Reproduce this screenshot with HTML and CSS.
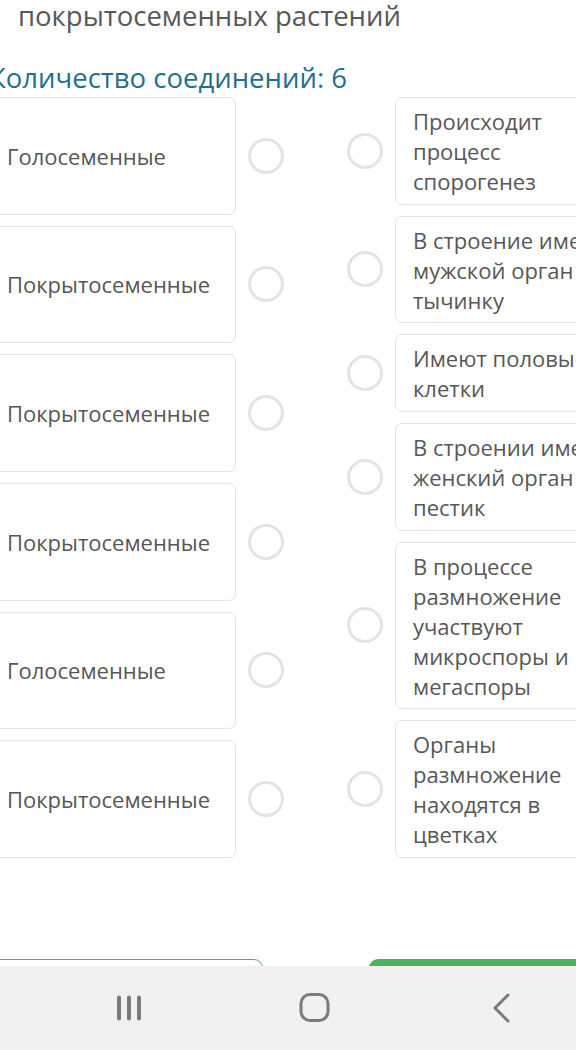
FILE: index.html
```html
<!DOCTYPE html>
<html lang="ru">
<head>
    <meta charset="UTF-8" />
    <meta name="viewport" content="width=device-width, initial-scale=1" />
    <title>Соединения</title>
    <link rel="stylesheet" href="styles.css">
</head>
<body>

    <main class="page">
        <h2 class="task-title">покрытосеменных растений</h2>
        <p class="count">Количество соединений: 6</p>

        <section class="match">
            <div class="col col-left">
                <div class="row">
                    <div class="card">Голосеменные</div>
                    <span class="pin"></span>
                </div>
                <div class="row">
                    <div class="card">Покрытосеменные</div>
                    <span class="pin"></span>
                </div>
                <div class="row">
                    <div class="card">Покрытосеменные</div>
                    <span class="pin"></span>
                </div>
                <div class="row">
                    <div class="card">Покрытосеменные</div>
                    <span class="pin"></span>
                </div>
                <div class="row">
                    <div class="card">Голосеменные</div>
                    <span class="pin"></span>
                </div>
                <div class="row">
                    <div class="card">Покрытосеменные</div>
                    <span class="pin"></span>
                </div>
            </div>

            <div class="col col-right">
                <div class="row">
                    <span class="pin"></span>
                    <div class="card">Происходит процесс спорогенез</div>
                </div>
                <div class="row">
                    <span class="pin"></span>
                    <div class="card">В строение имеет мужской орган тычинку</div>
                </div>
                <div class="row">
                    <span class="pin"></span>
                    <div class="card">Имеют половые клетки</div>
                </div>
                <div class="row">
                    <span class="pin"></span>
                    <div class="card">В строении имеет женский орган пестик</div>
                </div>
                <div class="row">
                    <span class="pin"></span>
                    <div class="card">В процессе размножение участвуют микроспоры и мегаспоры</div>
                </div>
                <div class="row">
                    <span class="pin"></span>
                    <div class="card">Органы размножение находятся в цветках</div>
                </div>
            </div>
        </section>

        <div class="actions">
            <button class="btn btn-outline" type="button">Назад</button>
            <button class="btn btn-green" type="button">Далее</button>
        </div>
    </main>

    <!-- system navigation bar -->
    <nav class="navbar">
        <span class="nav-slot">
            <svg width="26" height="26" viewBox="0 0 26 26">
                <rect x="2" y="0.5" width="4" height="25" rx="2" fill="#7b7b7b" />
                <rect x="12" y="0.5" width="4" height="25" rx="2" fill="#7b7b7b" />
                <rect x="22" y="0.5" width="4" height="25" rx="2" fill="#7b7b7b" />
            </svg>
        </span>
        <span class="nav-slot">
            <svg width="32" height="30" viewBox="0 0 32 30">
                <rect x="2" y="1.5" width="27" height="26" rx="9" fill="none" stroke="#7b7b7b" stroke-width="3" />
            </svg>
        </span>
        <span class="nav-slot">
            <svg width="20" height="30" viewBox="0 0 20 30">
                <polyline points="16,2 3,15 16,28" fill="none" stroke="#7b7b7b" stroke-width="3" stroke-linecap="round" stroke-linejoin="round" />
            </svg>
        </span>
    </nav>

</body>
</html>
```

FILE: styles.css
```css
body {
    margin: 0;
    width: 576px;
    height: 1050px;
    overflow: hidden;
    background: #fff;
    font-family: "Open Sans", "Noto Sans", sans-serif;
    color: #575757;
}

.page {
    margin-left: -11px;
    width: 660px;
}

.task-title {
    margin: -2px 0 0;
    padding-left: 29px;
    font-size: 27.5px;
    line-height: 36px;
    font-weight: 400;
    color: #585858;
    white-space: nowrap;
}

.count {
    margin: 27px 0 0;
    font-size: 27.5px;
    line-height: 34px;
    color: #1f6f8e;
    white-space: nowrap;
}

.match {
    display: flex;
    gap: 63px;
    margin-top: 2px;
}

.col {
    display: flex;
    flex-direction: column;
    gap: 11px;
}

.col-left .row {
    flex: 1;
}

.row {
    display: flex;
    align-items: center;
    gap: 12px;
}

.card {
    box-sizing: border-box;
    border: 1px solid #e2e4e4;
    border-radius: 7px;
    background: #fff;
    font-size: 22px;
    line-height: 30px;
}

.col-left .card {
    width: 247px;
    align-self: stretch;
    display: flex;
    align-items: center;
    padding: 0 17px;
}

.col-right .card {
    width: 238px;
    padding: 8px 17px 7.67px;
}

.pin {
    flex: none;
    box-sizing: border-box;
    width: 36px;
    height: 36px;
    border: 3px solid #e0e5e5;
    border-radius: 50%;
}

.actions {
    display: flex;
    justify-content: space-between;
    margin-top: 101px;
    width: 680px;
}

.btn {
    height: 56px;
    border-radius: 9px;
    font-family: inherit;
    font-size: 20px;
}

.btn-outline {
    width: 280px;
    margin-left: -6px;
    background: #fff;
    border: 1.5px solid #5f9f9b;
    color: #1f6f8e;
}

.btn-green {
    width: 300px;
    background: #46b45a;
    border: none;
    color: #fff;
}

.navbar {
    position: fixed;
    left: 0;
    bottom: 0;
    width: 576px;
    height: 84px;
    box-sizing: border-box;
    padding-left: 34px;
    display: flex;
    align-items: center;
    background: #f1f1f1;
}

.nav-slot {
    flex: none;
    width: 187px;
    display: flex;
    justify-content: center;
}

.nav-slot svg {
    display: block;
}
```
